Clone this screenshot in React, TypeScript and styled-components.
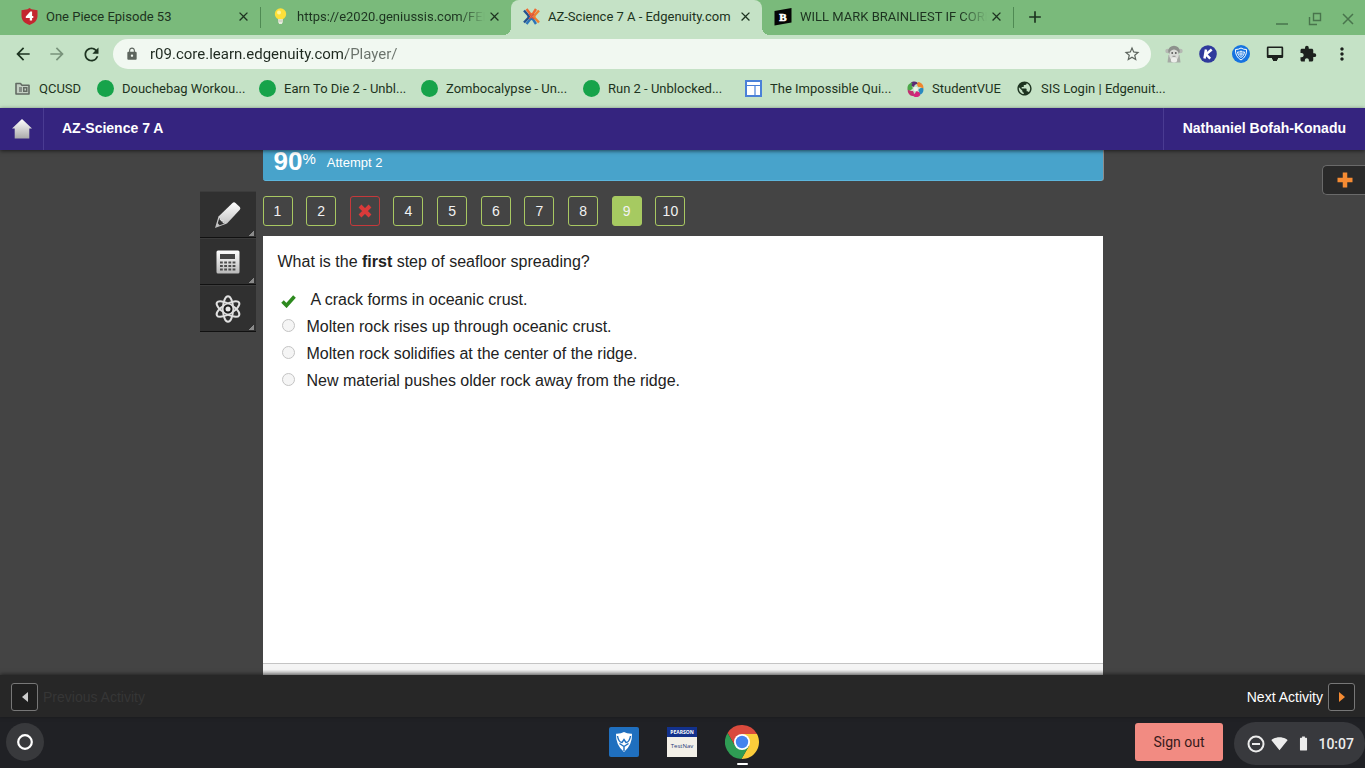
import React from "react";
import styled, { createGlobalStyle, css } from "styled-components";
import {
  MdArrowBack,
  MdArrowForward,
  MdRefresh,
  MdLock,
  MdStarBorder,
  MdExtension,
  MdMoreVert,
  MdClose,
  MdAdd,
  MdPublic,
  MdOutlineDoNotDisturbOn,
  MdSignalWifi4Bar,
  MdBatteryFull,
} from "react-icons/md";

const roboto = `Roboto, "Noto Sans", sans-serif`;
const arial = `"Liberation Sans", Arial, sans-serif`;

const GlobalStyle = createGlobalStyle`
  * { box-sizing: border-box; }
  body { margin: 0; background: #444; font-family: ${arial}; }
  button { font: inherit; color: inherit; border: 0; padding: 0; background: none; cursor: pointer; }
  a { color: inherit; text-decoration: none; }
  svg { display: block; flex: none; }
`;

const Page = styled.div`
  min-height: 100vh;
  display: flex;
  flex-direction: column;
`;

const IconButton = styled.button<{ $dim?: boolean }>`
  width: 18px;
  height: 18px;
  display: flex;
  align-items: center;
  justify-content: center;
  flex: none;
  ${(p) => p.$dim && css`opacity: 0.45;`}
`;

/* ---------- Browser ---------- */

const Browser = styled.header`
  font-family: ${roboto};
  color: #1d3320;
  background: #c5e2c6;
`;

const TabStrip = styled.div`
  height: 35px;
  display: flex;
  background: #7aba7b;
  padding-left: 9px;
`;

const Tab = styled.div<{ $active?: boolean; $divider?: boolean }>`
  width: 251px;
  height: 35px;
  padding: 0 8px 2px 12px;
  display: flex;
  align-items: center;
  font-size: 13px;
  position: relative;
  ${(p) =>
    p.$active &&
    css`
      background: #c5e2c6;
      border-radius: 8px 8px 0 0;
      &::before,
      &::after {
        content: "";
        position: absolute;
        bottom: 0;
        width: 8px;
        height: 8px;
      }
      &::before {
        left: -8px;
        background: radial-gradient(circle at 0 0, transparent 8px, #c5e2c6 8px);
      }
      &::after {
        right: -8px;
        background: radial-gradient(circle at 100% 0, transparent 8px, #c5e2c6 8px);
      }
    `}
  ${(p) =>
    p.$divider &&
    css`
      &::after {
        content: "";
        position: absolute;
        right: -1px;
        top: 7px;
        width: 1px;
        height: 21px;
        background: #4f8a53;
      }
    `}
`;

const TabTitle = styled.a<{ $fade?: boolean }>`
  flex: 1;
  min-width: 0;
  margin-left: 8px;
  overflow: hidden;
  white-space: nowrap;
  ${(p) => p.$fade && css`mask-image: linear-gradient(90deg, #000 calc(100% - 26px), transparent);`}
`;

const WindowControls = styled.div`
  margin-left: auto;
  padding: 2px 8px 0 0;
  display: flex;
  align-items: center;
  gap: 15px;
  color: #49744c;
`;

const NewTab = styled(IconButton)`
  margin: 8px 0 0 13px;
`;

const Toolbar = styled.div`
  height: 38px;
  padding: 0 14px;
  display: flex;
  align-items: center;
`;

const NavGroup = styled.div`
  display: flex;
  gap: 16px;
  margin-right: 13px;
`;

const AddressBar = styled.label`
  flex: 1;
  height: 30px;
  padding: 0 10px 0 12px;
  display: flex;
  align-items: center;
  gap: 11px;
  border-radius: 15px;
  background: #f1f8f1;
  color: #5d655e;
`;

const AddressInput = styled.input`
  flex: 1;
  min-width: 0;
  border: 0;
  outline: 0;
  padding: 0;
  height: 22px;
  font: 15px ${roboto};
  color: transparent;
  background: linear-gradient(90deg, #1f2a20 196px, #6a726b 196px);
  background-clip: text;
  -webkit-background-clip: text;
`;

const Extensions = styled.div`
  width: 186px;
  margin-left: 14px;
  display: flex;
  justify-content: space-between;
  color: #1c211d;
`;

const Bookmarks = styled.nav`
  height: 35px;
  padding: 0 14px 4px;
  display: flex;
  align-items: center;
  gap: 16px;
  font-size: 13px;
`;

const Bookmark = styled.a<{ $width: number }>`
  display: flex;
  align-items: center;
  gap: 8px;
  white-space: nowrap;
  width: ${(p) => p.$width}px;
`;

const GreenDot = styled.span`
  width: 17px;
  height: 17px;
  border-radius: 50%;
  background: #16a34a;
  flex: none;
`;

/* ---------- Course header ---------- */

const CourseBar = styled.header`
  height: 42px;
  display: flex;
  align-items: stretch;
  background: #35247f;
  color: #fff;
  font-size: 14px;
  font-weight: bold;
  position: relative;
  z-index: 1;
  box-shadow: 0 1px 4px rgba(0, 0, 0, 0.6);
`;

const HomeLink = styled.a`
  width: 44px;
  display: flex;
  align-items: center;
  justify-content: center;
  border-right: 1px solid #4a3b92;
`;

const CourseTitle = styled.h1`
  margin: 0;
  padding-left: 18px;
  font-size: 14px;
  line-height: 41px;
`;

const UserName = styled.button`
  margin-left: auto;
  padding: 0 19px 1px;
  border-left: 1px solid #4a3b92;
  line-height: 41px;
`;

/* ---------- Player ---------- */

const Stage = styled.main`
  flex: 1;
  display: grid;
  grid-template-columns: 1fr minmax(0, 840px) 1fr;
  background: #444;
`;

const Tools = styled.div`
  justify-self: end;
  width: 56px;
  margin: 41px 7px 0 0;
`;

const Tool = styled.button`
  width: 56px;
  height: 47px;
  display: flex;
  align-items: center;
  justify-content: center;
  background: linear-gradient(315deg, #8a8a8a 4px, transparent 4px) right 2px bottom 1px / 6px 6px no-repeat, #303030;
  border-top: 1px solid #3c3c3c;
  border-bottom: 1px solid #111;
`;

const Lesson = styled.section`
  display: flex;
  flex-direction: column;
`;

const ScoreBanner = styled.div`
  height: 31px;
  padding-left: 11px;
  display: flex;
  background: #48a3cb;
  border-bottom: 1px solid #5cb6dd;
  border-radius: 0 0 3px 3px;
  box-shadow: 1px 0 0 #8d8d8d;
  color: #fff;
`;

const Score = styled.strong`
  font-size: 26px;
  line-height: 22px;
`;

const Percent = styled.span`
  font-size: 15px;
  line-height: 17px;
  margin-right: 11px;
`;

const Attempt = styled.span`
  font-size: 13px;
  line-height: 25px;
`;

const QuestionNav = styled.nav`
  width: 423px;
  margin: 15px 0 10px;
  display: flex;
  justify-content: space-between;
`;

const QuestionButton = styled.button<{ $state?: "wrong" | "current" }>`
  width: 30px;
  height: 30px;
  padding-bottom: 1px;
  display: flex;
  align-items: center;
  justify-content: center;
  font-size: 14px;
  color: #f2f2f2;
  border-radius: 3px;
  border: 1px solid ${(p) => (p.$state === "wrong" ? "#c5393b" : "#a9c862")};
  background: ${(p) => (p.$state === "current" ? "#a6ca61" : "transparent")};
`;

const Sheet = styled.div`
  flex: 1;
  display: flex;
  flex-direction: column;
  justify-content: space-between;
  background: #fff;
  color: #222;
  font-size: 16px;
`;

const Question = styled.form`
  padding: 14px 15px;
`;

const Prompt = styled.p`
  margin: 0 0 12px;
  line-height: 24px;
`;

const Choice = styled.label`
  display: flex;
  align-items: center;
  height: 27px;
`;

const ChoiceText = styled.span<{ $correct?: boolean }>`
  margin-left: ${(p) => (p.$correct ? 15 : 12)}px;
`;

const Radio = styled.input`
  appearance: none;
  width: 13px;
  height: 13px;
  margin: 0 0 2px 4px;
  border: 1px solid #c4c4c4;
  border-radius: 50%;
  background: #f5f5f5;
`;

const CheckIcon = styled.svg`
  margin: 3px 0 0 3px;
`;

const SheetFooter = styled.div`
  height: 12px;
  border-top: 1px solid #c4c4c4;
  background: linear-gradient(#f4f4f4 50%, #bdbdbd);
`;

const Drawer = styled.button`
  justify-self: end;
  width: 43px;
  height: 30px;
  margin-top: 15px;
  padding-left: 2px;
  display: flex;
  align-items: center;
  justify-content: center;
  border: 1px solid #6a6a6a;
  border-right: 0;
  border-radius: 5px 0 0 5px;
  background: #2a2a2a;
`;

const ActivityBar = styled.footer`
  height: 42px;
  padding: 0 10px 0 11px;
  display: flex;
  align-items: center;
  justify-content: space-between;
  background: #272727;
  box-shadow: 0 -1px 4px rgba(0, 0, 0, 0.5);
  font-size: 14px;
  position: relative;
`;

const ActivityButton = styled.button<{ $muted?: boolean }>`
  display: flex;
  align-items: center;
  gap: 5px;
  padding-top: 2px;
  color: ${(p) => (p.$muted ? "#363636" : "#fff")};
`;

const ArrowBox = styled.span`
  width: 27px;
  height: 28px;
  display: flex;
  align-items: center;
  justify-content: center;
  border: 1px solid #777;
  border-radius: 3px;
  background: #1f1f1f;
`;

/* ---------- Shelf ---------- */

const Shelf = styled.footer`
  height: 51px;
  padding: 0 0 1px 3px;
  display: grid;
  grid-template-columns: 1fr auto 1fr;
  align-items: center;
  background: #202125;
  font-family: ${roboto};
`;

const Launcher = styled.button`
  width: 38px;
  height: 38px;
  margin-left: 3px;
  display: flex;
  align-items: center;
  justify-content: center;
  border-radius: 50%;
  background: #38393c;
`;

const Apps = styled.div`
  display: flex;
  align-items: center;
  gap: 28px;
`;

const AppButton = styled.button<{ $running?: boolean }>`
  position: relative;
  ${(p) =>
    p.$running &&
    css`
      &::after {
        content: "";
        position: absolute;
        left: 12px;
        bottom: -6px;
        width: 11px;
        height: 2px;
        border-radius: 1px;
        background: #fff;
      }
    `}
`;

const ShelfEnd = styled.div`
  justify-self: end;
  display: flex;
  align-items: center;
  gap: 11px;
`;

const SignOut = styled.button`
  width: 88px;
  height: 38px;
  border-radius: 3px;
  background: #f28b82;
  color: #371a1a;
  font-size: 14px;
`;

const Tray = styled.button`
  width: 131px;
  height: 43px;
  margin-top: 3px;
  padding: 0 11px 0 13px;
  display: flex;
  align-items: center;
  justify-content: space-between;
  border-radius: 22px;
  background: #38393d;
  color: #ececec;
  font-size: 14px;
  font-weight: 500;
`;

/* ---------- Icons ---------- */

const AnimeIcon = () => (
  <svg width="17" height="17" viewBox="0 0 17 17">
    <path d="M8.500 0 10.500 1.300 16.500 2.200V8C16.500 12.500 13 15.500 8.500 17 4 15.500.5 12.500.5 8V2.200L6.500 1.300Z" fill="#c4262f" />
    <path d="M9.300 3.500 4.800 8.500V10h4v2.500h2.300V10h1.200V8h-1.200V3.500Z" fill="#fff" />
  </svg>
);

const BulbIcon = () => (
  <svg width="17" height="17" viewBox="0 0 17 17">
    <circle cx="8.500" cy="6" r="5.700" fill="#fde03a" />
    <circle cx="7" cy="4.500" r="2" fill="#fff59a" />
    <path d="M6 11.300h5v2.500L9.800 16H7.200L6 13.800Z" fill="#e9ecdf" />
    <path d="M6 13h5" stroke="#b5b9a5" strokeWidth=".8" />
  </svg>
);

const EdgenuityIcon = () => (
  <svg width="17" height="17" viewBox="0 0 17 17" fill="none" strokeWidth="2.400">
    <path d="M1 2.500 5 7Q6.500 8.500 5 10.200L1 14.500" stroke="#24508f" />
    <path d="M3.500 1 7 5.500Q8.500 7 10.500 5L13 1" stroke="#ee6a32" />
    <path d="M16 2.500 12 7Q10.500 8.500 12 10.200L16 14.500" stroke="#f0812f" />
    <path d="M3.500 16 7 11.500Q8.500 10 10.500 12L13 16" stroke="#2d75b8" />
    <path d="m6 6 5 5M11 6l-5 5" stroke="#d9543e" strokeWidth="1.600" />
  </svg>
);

const BrainlyIcon = () => (
  <svg width="18" height="18" viewBox="0 0 18 18">
    <path d="M.5 3 17.500 0v14.500L.5 17.500Z" fill="#050505" />
    <text x="9" y="12.500" textAnchor="middle" fontFamily="Liberation Serif, serif" fontSize="11" fontWeight="bold" fill="#fff" stroke="#fff" strokeWidth=".6">
      B
    </text>
  </svg>
);

const FolderIcon = () => (
  <svg width="17" height="17" viewBox="0 0 17 17">
    <path d="M2 3.500h4.500l1.500 1.700h7v8.800H2Z" fill="#c3d0c3" stroke="#626b63" strokeWidth="1.600" strokeLinejoin="round" />
    <rect x="5" y="7" width="3" height="5" fill="#858d86" />
    <rect x="9" y="7" width="4.500" height="5" fill="#626b63" />
    <rect x="10.500" y="8.500" width="1.500" height="2" fill="#c3d0c3" />
  </svg>
);

const SiteIcon = () => (
  <svg width="17" height="17" viewBox="0 0 17 17">
    <rect x="1" y="1" width="15" height="15" fill="#fff" stroke="#4a80d8" strokeWidth="2" />
    <path d="M2 5.500h13M10 5.500V15" stroke="#4a80d8" strokeWidth="1.200" />
  </svg>
);

const PinwheelIcon = () => (
  <svg width="17" height="18" viewBox="0 0 18 18">
    <path d="M4 2.500C6.500 0 11 .5 12.500 4 10 3.300 8 4 7.500 6.500 4.500 7 3.500 5 4 2.500Z" fill="#5b2a73" />
    <path d="M12 1.500C16 2 18.500 6 17 9.500 16 7.500 14.500 6.500 12 7 10 5 10.500 2.800 12 1.500Z" fill="#f0862d" />
    <path d="M17.300 8.500C18 12.500 15.500 15.500 11.500 15.500 13.300 14 13.500 12 12 10 13.500 8 15.500 7.500 17.300 8.500Z" fill="#2a8ac0" />
    <path d="M14 15.500C11.500 18.500 6.500 18 5 14.500 7.500 15 9 14 9.500 11.500 12.500 11.500 14 13 14 15.500Z" fill="#d4267d" />
    <path d="M6 16.500C2 16 0 12 1 8.500 2.300 10.500 4 11.500 6.300 11 8 13 7.500 15.500 6 16.500Z" fill="#c32f72" />
    <path d="M.8 10C-.3 6 2 2.500 6 2.500 4.500 4.200 4.500 6 6.300 8 5 10.300 2.500 11 .8 10Z" fill="#4ba849" />
    <circle cx="9.200" cy="9" r="2.400" fill="#edf5ed" />
  </svg>
);

const MonkeyIcon = () => (
  <svg width="18" height="18" viewBox="0 0 18 18">
    <circle cx="2.600" cy="6" r="2.300" fill="#b5b8b3" />
    <circle cx="15.400" cy="6" r="2.300" fill="#b5b8b3" />
    <ellipse cx="9" cy="6" rx="5.800" ry="5.200" fill="#8d918c" />
    <path d="M3.500 10h11l1 7.500h-13Z" fill="#a6aaa5" />
    <ellipse cx="9" cy="10" rx="4.800" ry="5.500" fill="#d9dbd7" />
    <ellipse cx="9" cy="15" rx="3.200" ry="2.500" fill="#ecedea" />
    <circle cx="7.200" cy="8" r=".9" fill="#555" />
    <circle cx="10.800" cy="8" r=".9" fill="#555" />
    <path d="M7.500 11.300h3" stroke="#777" strokeWidth=".8" />
  </svg>
);

const KIcon = () => (
  <svg width="18" height="18" viewBox="0 0 18 18">
    <circle cx="9" cy="9" r="8.800" fill="#2f3a9c" />
    <path d="M7 4.500 5.500 13.500M12.700 4.500 7 9.400l4.200 4.200" stroke="#fff" strokeWidth="2.500" fill="none" />
  </svg>
);

const ShieldIcon = () => (
  <svg width="18" height="18" viewBox="0 0 18 18" fill="none" stroke="#fff">
    <circle cx="9" cy="9" r="9" fill="#1673e0" stroke="none" />
    <path d="M9 3q2.500 1.600 5.500 1.500Q15 11.500 9 15 3 11.500 3.500 4.500 6.500 4.600 9 3Z" />
    <path d="M5.500 7q2 .5 3.500-1 1.500 1.500 3.500 1-.2 4-3.500 5.500Q5.700 11 5.500 7Z" />
    <circle cx="9" cy="9" r="1.200" />
  </svg>
);

const MonitorIcon = () => (
  <svg width="18" height="18" viewBox="0 0 18 18" fill="#1c211d">
    <path fillRule="evenodd" d="M2 1.500h14q1.200 0 1.200 1.200v9.100q0 1.200-1.200 1.200h-4v1.500h-1V16H7v-1.500H6V13H2Q.8 13 .8 11.800V2.700Q.8 1.500 2 1.500ZM2.500 3v7h13V3Z" />
  </svg>
);

const HomeIcon = () => (
  <svg width="20" height="20" viewBox="0 0 20 20">
    <defs>
      <linearGradient id="home" x2="0" y2="1">
        <stop stopColor="#fff" />
        <stop offset="1" stopColor="#aaa" />
      </linearGradient>
    </defs>
    <path d="M10 0 20 9.500H17.300V19.500H2.700V9.500H0Z" fill="url(#home)" />
  </svg>
);

const PencilIcon = () => (
  <svg width="30" height="30" viewBox="0 0 30 30">
    <defs>
      <linearGradient id="metal" x2="0" y2="1">
        <stop stopColor="#fff" />
        <stop offset="1" stopColor="#b9b9b9" />
      </linearGradient>
    </defs>
    <path d="M19.500 3Q21 1.700 22.500 3L26.800 7Q28 8.300 26.800 9.800L14 23.500 2 28 5.500 16.500Z" fill="url(#metal)" />
    <path d="M6.300 18 12.300 23.300 6.500 25.200 4.800 23.300Z" fill="#303030" />
    <path d="m6.800 18.500 2 2.200 1.200-.2.300 2 2.300.8" stroke="#ddd" strokeWidth="1.300" fill="none" />
  </svg>
);

const CalculatorIcon = () => (
  <svg width="24" height="24" viewBox="0 0 24 24">
    <rect x=".5" y=".5" width="23" height="23" rx="1.500" fill="url(#metal)" />
    <rect x="4" y="4" width="15" height="5" fill="#454545" />
    <path d="M4 12.500h16M4 16h16M4 19.500h16" stroke="#4c4c4c" strokeWidth="2" strokeDasharray="2.800 1.400" />
  </svg>
);

const AtomIcon = () => (
  <svg width="28" height="28" viewBox="0 0 28 28" fill="none" stroke="#e0e0e0" strokeWidth="2">
    <ellipse cx="14" cy="14" rx="5" ry="12.800" />
    <ellipse cx="14" cy="14" rx="5" ry="12.800" transform="rotate(60 14 14)" />
    <ellipse cx="14" cy="14" rx="5" ry="12.800" transform="rotate(120 14 14)" />
    <circle cx="14" cy="14" r="3.500" fill="#e8e8e8" stroke="#1c1c1c" />
  </svg>
);

const WrongIcon = () => (
  <svg width="14" height="14" viewBox="0 0 14 14">
    <path d="M2 2l10 10M12 2 2 12" stroke="#d93a3a" strokeWidth="4" />
  </svg>
);

const ShieldAppIcon = () => (
  <svg width="30" height="30" viewBox="0 0 30 30">
    <rect width="30" height="30" rx="2" fill="#1f6fbf" />
    <path d="M15 5q3 2 8 1.800Q23.500 18 15 25 6.500 18 7 6.800 12 7 15 5Z" fill="#fff" />
    <path d="M8.500 9q1 6 4.500 6.500L15 12.500l2 3q3.500-.5 4.500-6.500M10.500 16.500l4.500 3 4.500-3M15 19.500V24" stroke="#1f6fbf" strokeWidth="1.400" fill="none" />
  </svg>
);

const TestNavIcon = () => (
  <svg width="30" height="30" viewBox="0 0 30 30">
    <rect width="30" height="30" fill="#f3f0e8" />
    <rect width="30" height="10" fill="#12318c" />
    <text x="15" y="7" textAnchor="middle" fontFamily="Open Sans, sans-serif" fontSize="5" fontWeight="bold" fill="#fff">
      PEARSON
    </text>
    <text x="15" y="21" textAnchor="middle" fontFamily="Open Sans, sans-serif" fontSize="6" fill="#1e3a78">
      TestNav
    </text>
  </svg>
);

const ChromeIcon = () => (
  <svg width="34" height="34" viewBox="-17 -17 34 34">
    <path d="M-14.430-8.990A17 17 0 0 1 15-8H0L-6.930 4Z" fill="#d94a3d" />
    <path d="M15-8A17 17 0 0 1-.57 16.990L6.930 4 0-8Z" fill="#fbcc3b" />
    <path d="M-.57 16.990A17 17 0 0 1-14.430-8.990L-6.930 4H6.930Z" fill="#2f9c54" />
    <circle r="8" fill="#fff" />
    <circle r="6.200" fill="#4484ee" />
  </svg>
);

const NotificationsOffIcon = () => (
  <svg width="18" height="18" viewBox="0 0 18 18" fill="none" stroke="currentColor" strokeWidth="2">
    <circle cx="9" cy="9" r="7.500" />
    <path d="M5 9h8" />
  </svg>
);

/* ---------- Page ---------- */

const tabs = [
  { title: "One Piece Episode 53", icon: <AnimeIcon />, divider: true },
  { title: "https://e2020.geniussis.com/FED", icon: <BulbIcon />, fade: true },
  { title: "AZ-Science 7 A - Edgenuity.com", icon: <EdgenuityIcon />, active: true },
  { title: "WILL MARK BRAINLIEST IF CORR", icon: <BrainlyIcon />, fade: true, divider: true },
];

const bookmarks = [
  { title: "QCUSD", icon: <FolderIcon />, width: 67 },
  { title: "Douchebag Workou...", icon: <GreenDot />, width: 146 },
  { title: "Earn To Die 2 - Unbl...", icon: <GreenDot />, width: 146 },
  { title: "Zombocalypse - Un...", icon: <GreenDot />, width: 146 },
  { title: "Run 2 - Unblocked...", icon: <GreenDot />, width: 146 },
  { title: "The Impossible Qui...", icon: <SiteIcon />, width: 146 },
  { title: "StudentVUE", icon: <PinwheelIcon />, width: 93 },
  { title: "SIS Login | Edgenuit...", icon: <MdPublic size={17} />, width: 146 },
];

const wrongChoices = [
  "Molten rock rises up through oceanic crust.",
  "Molten rock solidifies at the center of the ridge.",
  "New material pushes older rock away from the ridge.",
];

const questionState = (n: number) => (n === 3 ? "wrong" : n === 9 ? "current" : undefined);

export default function App() {
  return (
    <Page>
      <GlobalStyle />
      <Browser>
        <TabStrip>
          {tabs.map((t) => (
            <Tab key={t.title} $active={t.active} $divider={t.divider}>
              {t.icon}
              <TabTitle href="#" $fade={t.fade}>{t.title}</TabTitle>
              <IconButton aria-label="Close tab"><MdClose size={15} /></IconButton>
            </Tab>
          ))}
          <NewTab aria-label="New tab"><MdAdd size={20} /></NewTab>
          <WindowControls>
            <IconButton aria-label="Minimize">
              <svg width="18" height="18" viewBox="0 0 18 18"><path d="M3 14h12" stroke="currentColor" strokeWidth="1.500" /></svg>
            </IconButton>
            <IconButton aria-label="Restore">
              <svg width="18" height="18" viewBox="0 0 18 18" fill="none" stroke="currentColor" strokeWidth="1.400"><path d="M7.500 3.500h7v7h-7ZM3.500 7v7.500H11" /></svg>
            </IconButton>
            <IconButton aria-label="Close window">
              <svg width="18" height="18" viewBox="0 0 18 18"><path d="m4 4 10 10M14 4 4 14" stroke="currentColor" strokeWidth="1.500" /></svg>
            </IconButton>
          </WindowControls>
        </TabStrip>
        <Toolbar>
          <NavGroup>
            <IconButton aria-label="Back"><MdArrowBack size={20} /></IconButton>
            <IconButton aria-label="Forward" $dim><MdArrowForward size={20} /></IconButton>
            <IconButton aria-label="Reload"><MdRefresh size={21} /></IconButton>
          </NavGroup>
          <AddressBar>
            <MdLock size={14} />
            <AddressInput aria-label="Address" defaultValue="r09.core.learn.edgenuity.com/Player/" />
            <IconButton aria-label="Bookmark this page"><MdStarBorder size={18} /></IconButton>
          </AddressBar>
          <Extensions>
            <IconButton aria-label="Monkey"><MonkeyIcon /></IconButton>
            <IconButton aria-label="Kami"><KIcon /></IconButton>
            <IconButton aria-label="Shield"><ShieldIcon /></IconButton>
            <IconButton aria-label="Screen"><MonitorIcon /></IconButton>
            <IconButton aria-label="Extensions"><MdExtension size={18} /></IconButton>
            <IconButton aria-label="Menu"><MdMoreVert size={20} /></IconButton>
          </Extensions>
        </Toolbar>
        <Bookmarks>
          {bookmarks.map((b) => (
            <Bookmark key={b.title} href="#" $width={b.width}>
              {b.icon}
              <span>{b.title}</span>
            </Bookmark>
          ))}
        </Bookmarks>
      </Browser>

      <CourseBar>
        <HomeLink href="#" aria-label="Home"><HomeIcon /></HomeLink>
        <CourseTitle>AZ-Science 7 A</CourseTitle>
        <UserName>Nathaniel Bofah-Konadu</UserName>
      </CourseBar>

      <Stage>
        <Tools>
          <Tool aria-label="Highlighter"><PencilIcon /></Tool>
          <Tool aria-label="Calculator"><CalculatorIcon /></Tool>
          <Tool aria-label="Science tools"><AtomIcon /></Tool>
        </Tools>
        <Lesson>
          <ScoreBanner>
            <Score>90</Score>
            <Percent>%</Percent>
            <Attempt>Attempt 2</Attempt>
          </ScoreBanner>
          <QuestionNav>
            {[1, 2, 3, 4, 5, 6, 7, 8, 9, 10].map((n) => (
              <QuestionButton key={n} $state={questionState(n)} aria-label={`Question ${n}`}>
                {n === 3 ? <WrongIcon /> : n}
              </QuestionButton>
            ))}
          </QuestionNav>
          <Sheet>
            <Question>
              <Prompt>What is the <b>first</b> step of seafloor spreading?</Prompt>
              <Choice>
                <CheckIcon width="15" height="13" viewBox="0 0 15 13" role="img" aria-label="Correct">
                  <path d="M1.500 6.500 5.500 10.500 13.500 1.500" stroke="#2d8a1e" strokeWidth="3.600" fill="none" />
                </CheckIcon>
                <ChoiceText $correct>A crack forms in oceanic crust.</ChoiceText>
              </Choice>
              {wrongChoices.map((text) => (
                <Choice key={text}>
                  <Radio type="radio" name="answer" />
                  <ChoiceText>{text}</ChoiceText>
                </Choice>
              ))}
            </Question>
            <SheetFooter />
          </Sheet>
        </Lesson>
        <Drawer aria-label="Open drawer">
          <svg width="16" height="16" viewBox="0 0 16 16"><path d="M8 .5v15M.5 8h15" stroke="#f58b33" strokeWidth="4.500" /></svg>
        </Drawer>
      </Stage>

      <ActivityBar>
        <ActivityButton $muted>
          <ArrowBox><svg width="6" height="10" viewBox="0 0 6 10"><path d="M6 0v10L0 5Z" fill="#ccc" /></svg></ArrowBox>
          Previous Activity
        </ActivityButton>
        <ActivityButton>
          Next Activity
          <ArrowBox><svg width="6" height="10" viewBox="0 0 6 10"><path d="M0 0v10l6-5Z" fill="#f58b33" /></svg></ArrowBox>
        </ActivityButton>
      </ActivityBar>

      <Shelf>
        <Launcher aria-label="Launcher">
          <svg width="16" height="16" viewBox="0 0 16 16"><circle cx="8" cy="8" r="6.800" fill="none" stroke="#fff" strokeWidth="2.200" /></svg>
        </Launcher>
        <Apps>
          <AppButton aria-label="Shield"><ShieldAppIcon /></AppButton>
          <AppButton aria-label="TestNav"><TestNavIcon /></AppButton>
          <AppButton aria-label="Chrome" $running><ChromeIcon /></AppButton>
        </Apps>
        <ShelfEnd>
          <SignOut>Sign out</SignOut>
          <Tray>
            <NotificationsOffIcon />
            <MdSignalWifi4Bar size={17} />
            <MdBatteryFull size={17} />
            10:07
          </Tray>
        </ShelfEnd>
      </Shelf>
    </Page>
  );
}
